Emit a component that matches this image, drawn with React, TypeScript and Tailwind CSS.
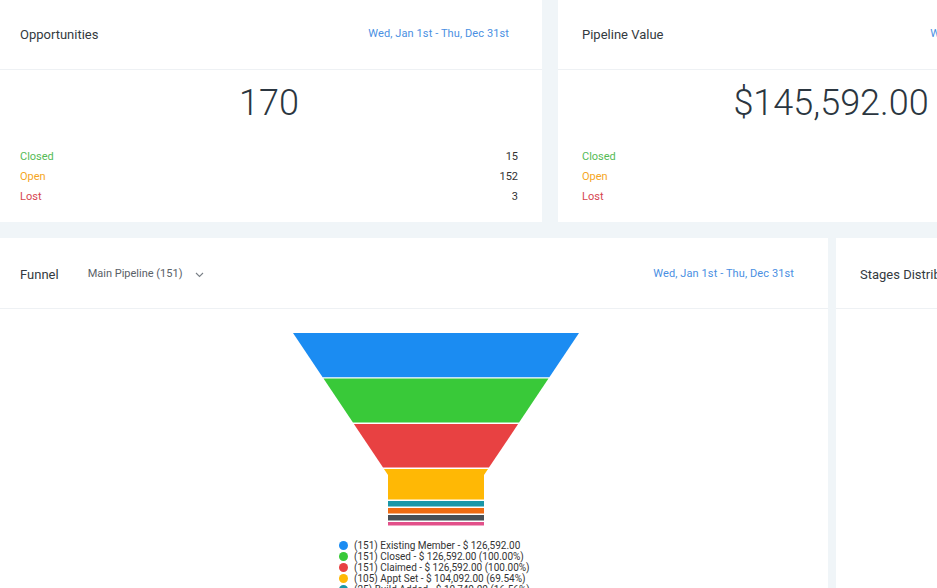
import React from "react";

const NECK_L = 388;
const NECK_R = 484;
const TOP_L = 293;
const TOP_R = 579;
const TOP_Y = 333;
const K = (NECK_L - TOP_L) / 142;

function lx(y: number) {
  return Math.min(NECK_L, TOP_L + (y - TOP_Y) * K);
}
function rx(y: number) {
  return Math.max(NECK_R, TOP_R - (y - TOP_Y) * K);
}

const NECK_Y = TOP_Y + 142;

const segments: [number, number, string][] = [
  [333, 377.3, "#1b8cf2"],
  [378.6, 422.6, "#39c939"],
  [424, 467.6, "#e84142"],
  [469, 499.6, "#ffb805"],
  [501, 506.6, "#1a97a8"],
  [508, 513.6, "#ef6b12"],
  [515, 520.6, "#484f56"],
  [522, 525.6, "#e2508a"],
];

function segPoints(y1: number, y2: number) {
  const ox = 4;
  const oy = 309;
  const pts: [number, number][] = [];
  const crosses = y1 < NECK_Y && y2 > NECK_Y;
  pts.push([lx(y1), y1]);
  pts.push([rx(y1), y1]);
  if (crosses) pts.push([rx(NECK_Y), NECK_Y]);
  pts.push([rx(y2), y2]);
  pts.push([lx(y2), y2]);
  if (crosses) pts.push([lx(NECK_Y), NECK_Y]);
  return pts.map(([x, y]) => `${x + ox},${y - oy}`).join(" ");
}

const legend: [string, string][] = [
  ["#1b8cf2", "(151) Existing Member - $ 126,592.00"],
  ["#39c939", "(151) Closed - $ 126,592.00 (100.00%)"],
  ["#e84142", "(151) Claimed - $ 126,592.00 (100.00%)"],
  ["#ffb805", "(105) Appt Set - $ 104,092.00 (69.54%)"],
  ["#1a97a8", "(25) Build Added - $ 10,740.00 (16.56%)"],
  ["#ef6b12", "(10) Follow Up - $ 4,230.00 (6.62%)"],
];

function StatCard({ title, value, nums }: { title: string; value: string; nums: string[] }) {
  return (
    <div className="w-[546px] h-[222px] shrink-0 bg-white flex flex-col">
      <div className="h-[70px] flex items-center justify-between pl-6 pr-[33px] border-b border-[#eef1f4]">
        <span className="text-[13px] text-[#333a40]">{title}</span>
        <span className="text-[11px] text-[#4a8fe2] tracking-[0.1px]">Wed, Jan 1st - Thu, Dec 31st</span>
      </div>
      <div className="flex flex-col px-6 pt-[14px]">
        <div className="text-center text-[36px] leading-[38px] font-light text-[#2b3640]">{value}</div>
        <div className="mt-[25px] flex flex-col text-[11px]">
          <div className="flex justify-between h-5 items-center">
            <span className="text-[#55bb55]">Closed</span>
            <span className="text-[#333]">{nums[0]}</span>
          </div>
          <div className="flex justify-between h-5 items-center">
            <span className="text-[#f5a623]">Open</span>
            <span className="text-[#333]">{nums[1]}</span>
          </div>
          <div className="flex justify-between h-5 items-center">
            <span className="text-[#d64550]">Lost</span>
            <span className="text-[#333]">{nums[2]}</span>
          </div>
        </div>
      </div>
    </div>
  );
}

export default function App() {
  return (
    <div className="w-[937px] h-[588px] overflow-hidden bg-[#f0f5f8] font-['Roboto',sans-serif]">
      <div className="flex gap-4 -ml-1">
        <StatCard title="Opportunities" value="170" nums={["15", "152", "3"]} />
        <StatCard title="Pipeline Value" value="$145,592.00" nums={["$12,450.00", "$132,142.00", "$1,000.00"]} />
      </div>
      <div className="flex gap-2 -ml-1 mt-4">
        <div className="w-[832px] shrink-0 h-[400px] bg-white flex flex-col">
          <div className="h-[71px] shrink-0 flex items-center pt-[3px] pl-6 pr-[34px] border-b border-[#eef1f4]">
            <span className="text-[13px] text-[#333a40]">Funnel</span>
            <span className="ml-[29px] text-[11px] text-[#5a6168]">Main Pipeline (151)</span>
            <svg className="ml-[13px] mt-[1px]" width="9" height="6" viewBox="0 0 9 6" fill="none">
              <path d="M1 1l3.5 3.5L8 1" stroke="#7a8087" strokeWidth="1.1" />
            </svg>
            <span className="ml-auto text-[11px] text-[#4a8fe2] tracking-[0.1px]">Wed, Jan 1st - Thu, Dec 31st</span>
          </div>
          <svg width="832" height="231" viewBox="0 0 832 231" className="block shrink-0">
            {segments.map(([y1, y2, c], i) => (
              <polygon key={i} points={segPoints(y1, y2)} fill={c} />
            ))}
          </svg>
          <div className="ml-[343px] flex flex-col">
            {legend.map(([c, t], i) => (
              <div key={i} className="flex items-center h-[11px]">
                <span className="w-[9px] h-[9px] rounded-full shrink-0" style={{ backgroundColor: c }} />
                <span className="ml-[6px] text-[10px] leading-[11px] text-[#333] whitespace-nowrap">{t}</span>
              </div>
            ))}
          </div>
        </div>
        <div className="w-[400px] shrink-0 h-[400px] bg-white flex flex-col">
          <div className="h-[71px] flex items-center pt-[3px] pl-6 border-b border-[#eef1f4]">
            <span className="text-[13px] text-[#333a40] whitespace-nowrap">Stages Distribution</span>
          </div>
        </div>
      </div>
    </div>
  );
}
